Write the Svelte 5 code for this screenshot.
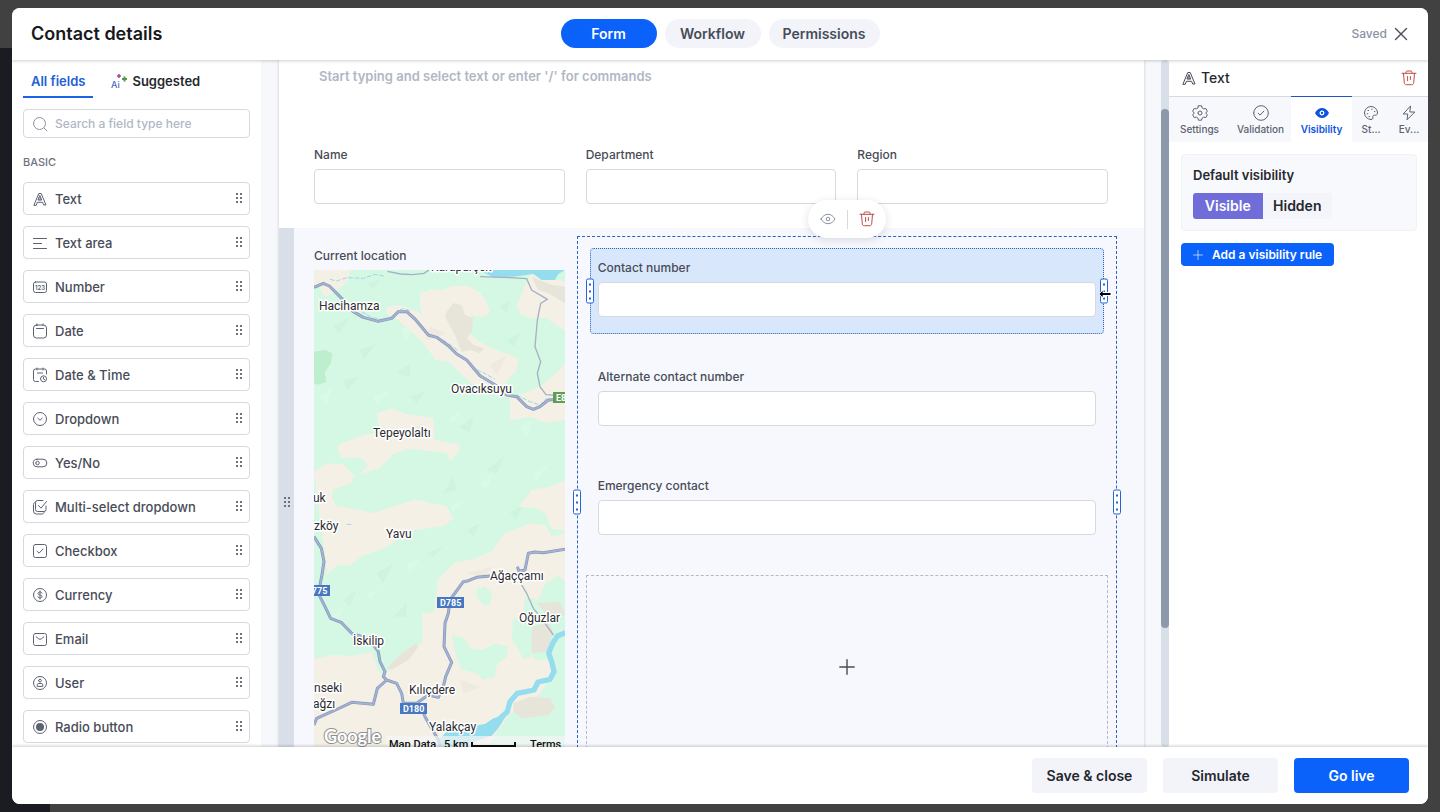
<script lang="ts">
  type Field = { icon: string; label: string };

  const steps = ['Form', 'Workflow', 'Permissions'];
  let step = $state('Form');

  const fields: Field[] = [
    { icon: 'text', label: 'Text' },
    { icon: 'textarea', label: 'Text area' },
    { icon: 'number', label: 'Number' },
    { icon: 'date', label: 'Date' },
    { icon: 'datetime', label: 'Date & Time' },
    { icon: 'dropdown', label: 'Dropdown' },
    { icon: 'yesno', label: 'Yes/No' },
    { icon: 'multi', label: 'Multi-select dropdown' },
    { icon: 'checkbox', label: 'Checkbox' },
    { icon: 'currency', label: 'Currency' },
    { icon: 'email', label: 'Email' },
    { icon: 'user', label: 'User' },
    { icon: 'radio', label: 'Radio button' },
  ];

  const panelTabs = [
    { id: 'settings', label: 'Settings' },
    { id: 'validation', label: 'Validation' },
    { id: 'visibility', label: 'Visibility' },
    { id: 'style', label: 'St...' },
    { id: 'events', label: 'Ev...' },
  ];
  let panelTab = $state('visibility');
  let visible = $state(true);

  const topFields = ['Name', 'Department', 'Region'];
  const sideFields = ['Contact number', 'Alternate contact number', 'Emergency contact'];

  // 16x16 grid, stroked
  const icons: Record<string, string> = {
    text: 'M2 14 6.800 2.500h2.400L14 14h-2.300l-1.100-2.700H5.400L4.300 14zM6.300 9h3.400L8 4.800zM8 6.500v2.500',
    textarea: 'M1.500 3.500h13M1.500 8.500h8M1.500 13.500h13',
    number: 'M3.500 3h9a2 2 0 0 1 2 2v6.500a2 2 0 0 1-2 2h-9a2 2 0 0 1-2-2V5a2 2 0 0 1 2-2z',
    date: 'M4.500 2h7a3 3 0 0 1 3 3v7a3 3 0 0 1-3 3h-7a3 3 0 0 1-3-3V5a3 3 0 0 1 3-3zM5 1v1.500M11 1v1.500M4.500 5.500h7',
    datetime: 'M6.500 14.500h-3a2 2 0 0 1-2-2V4a2 2 0 0 1 2-2h9a2 2 0 0 1 2 2v3M5 1v2M11 1v2M5.500 6h5M8.500 11.800a3 3 0 1 0 6 0 3 3 0 1 0-6 0M11.500 10.300v1.700l1.100.6',
    dropdown: 'M1.500 8a6.500 6.500 0 1 0 13 0 6.500 6.500 0 1 0-13 0M5.800 7.200 8 9.200l2.200-2',
    yesno: 'M5 4.200h6a3.800 3.800 0 0 1 0 7.600H5a3.800 3.800 0 0 1 0-7.600zM3.800 8a1.700 1.900 0 1 0 3.400 0 1.700 1.900 0 1 0-3.400 0',
    multi: 'M14 7v3.500a2 2 0 0 1-2 2H5.500a2 2 0 0 1-2-2v-7a2 2 0 0 1 2-2H11M6.500 6.500l2.500 2.700 5.500-6.700M3 3.500c-1 .2-1.500.9-1.500 2v6.500a3 3 0 0 0 3 3H10c1 0 1.700-.5 2-1.500',
    checkbox: 'M3.500 1.500h9a2 2 0 0 1 2 2v9a2 2 0 0 1-2 2h-9a2 2 0 0 1-2-2v-9a2 2 0 0 1 2-2zM5 8.200l2 2L11 6',
    currency: 'M1.500 8a6.500 6.500 0 1 0 13 0 6.500 6.500 0 1 0-13 0M8 4v8M10 6.200C9.800 5.300 9 5 8 5c-1.200 0-2 .6-2 1.500S6.800 7.800 8 8s2 .7 2 1.600S9.200 11 8 11c-1.100 0-1.900-.4-2.100-1.300',
    email: 'M3.500 2.500h9a2 2 0 0 1 2 2v8a2 2 0 0 1-2 2h-9a2 2 0 0 1-2-2v-8a2 2 0 0 1 2-2zM4.200 5.800C6 7 6.500 8.300 8 8.300S10 7 11.800 5.800',
    user: 'M1.500 8a6.500 6.500 0 1 0 13 0 6.500 6.500 0 1 0-13 0M6.600 5.600a1.400 1.400 0 1 0 2.800 0 1.400 1.400 0 1 0-2.800 0M5.200 11V9.800c0-.8.600-1.300 1.300-1.300h3c.700 0 1.300.5 1.300 1.300V11z',
    radio: 'M1.500 8a6.500 6.500 0 1 0 13 0 6.500 6.500 0 1 0-13 0',
    search: 'M1.500 7.500a6 6 0 1 0 12 0 6 6 0 1 0-12 0M12 12l3 2.800',
    settings: 'M6.500.8h3l.8 2.300c.5.2.9.4 1.200.7l2.300-.3 1.500 2.600L13.800 8l1.500 1.900-1.500 2.600-2.300-.3c-.3.3-.7.5-1.200.7l-.8 2.300h-3l-.8-2.300c-.5-.2-.9-.4-1.200-.7l-2.300.3L.7 9.900 2.200 8 .7 6.100l1.500-2.600 2.300.3c.3-.3.700-.5 1.200-.7zM6 8a2 2 0 1 0 4 0 2 2 0 1 0-4 0',
    validation: 'M.7 8a7.300 7.300 0 1 0 14.600 0A7.300 7.300 0 1 0 .7 8M5.200 8.200l1.900 1.900 3.800-4',
    style: 'M8 14.500A6.500 6.500 0 1 1 14.500 8c0 2-1.500 2.200-3 2.200-1.300 0-2 .6-1.600 1.900.4 1.400-.4 2.400-1.900 2.400zM5 5.500h.6M8.600 4.200h.6M11.300 6.600h.6M4.200 8.800h.6M6 11.600h.6',
    events: 'M9.300 1.200 2.200 9h4.600l-.8 5.800L13.800 7H9.200z',
    eye: 'M1 8c1.800-3 4.200-4.700 7-4.700S13.200 5 15 8c-1.800 3-4.200 4.700-7 4.700S2.800 11 1 8zM6.200 8a1.800 1.800 0 1 0 3.600 0 1.800 1.800 0 1 0-3.600 0',
    trash: 'M1 3.300h14M5 3.300V2.200C5 1.500 5.500 1 6.200 1h3.600c.7 0 1.200.5 1.200 1.200v1.100M2.500 3.300l.8 9.500c.1 1.200.8 1.900 2 1.900h5.400c1.200 0 1.900-.7 2-1.900l.8-9.500M6.600 6.500v4.200M9.400 6.500v3',
    close: 'M2.500 2.500l11 11M13.500 2.500l-11 11',
    plus: 'M8 .8v14.400M.8 8h14.400',
  };

  // town labels, in map pixels
  const towns = [
    { name: 'Karapürçek', x: 117, y: 1 },
    { name: 'Hacihamza', x: 5, y: 40 },
    { name: 'Ovacıksuyu', x: 137, y: 123 },
    { name: 'Tepeyolaltı', x: 59, y: 167 },
    { name: 'uk', x: -1, y: 232 },
    { name: 'zköy', x: 0, y: 260 },
    { name: 'Yavu', x: 72, y: 268 },
    { name: 'Ağaççamı', x: 176, y: 310 },
    { name: 'Oğuzlar', x: 205, y: 352 },
    { name: 'İskilip', x: 39, y: 375 },
    { name: 'nseki', x: 0, y: 422 },
    { name: 'ağzı', x: -1, y: 438 },
    { name: 'Kılıçdere', x: 95, y: 424 },
    { name: 'Yalakçay', x: 115, y: 461 },
  ];

  const shields = [
    { name: 'E80', x: 239, y: 122, color: '#5f9e4e' },
    { name: 'D775', x: -11, y: 315, color: '#4677c0' },
    { name: 'D785', x: 123, y: 327, color: '#4677c0' },
    { name: 'D180', x: 86, y: 433, color: '#4677c0' },
  ];
</script>

{#snippet icon(name: string, size = 16)}
  <svg class="icon" width={size} height={size} viewBox="0 0 16 16" aria-hidden="true">
    <path d={icons[name]} />
    {#if name === 'number'}
      <text x="8" y="10.500" text-anchor="middle">123</text>
    {:else if name === 'radio'}
      <circle class="solid" cx="8" cy="8" r="4" />
    {/if}
  </svg>
{/snippet}

{#snippet dots()}
  <svg class="dots" width="8" height="13" viewBox="0 0 8 13" aria-hidden="true">
    {#each [1, 5, 9] as y}
      <rect x="1" {y} width="2" height="2" />
      <rect x="5" {y} width="2" height="2" />
    {/each}
  </svg>
{/snippet}

{#snippet grip(side: string)}
  <span class="grip grip--{side}"><i></i><i></i><i></i></span>
{/snippet}

<div class="backdrop">
  <div class="modal" role="dialog" aria-label="Contact details">
    <header class="header">
      <h1>Contact details</h1>
      <nav class="steps">
        {#each steps as name}
          <button class="step" class:step--on={step === name} onclick={() => (step = name)}>{name}</button>
        {/each}
      </nav>
      <div class="status">
        <span>Saved</span>
        <button class="plain close" aria-label="Close">{@render icon('close')}</button>
      </div>
    </header>

    <div class="body">
      <aside class="sidebar">
        <div class="sidebar__tabs">
          <button class="side-tab side-tab--on">All fields</button>
          <button class="side-tab">
            <svg width="17" height="16" viewBox="0 0 17 16" aria-hidden="true">
              <text x="0" y="15" class="ai">Ai</text>
              <path d="M8 1v4M6 3h4" stroke="#b8488c" stroke-width="1.600" />
              <path d="M13.500 3.500v5M11 6h5" stroke="#4e9c46" stroke-width="2" />
            </svg>
            Suggested
          </button>
        </div>
        <label class="search">
          {@render icon('search')}
          <input type="text" placeholder="Search a field type here" aria-label="Search a field type here" />
        </label>
        <h2>BASIC</h2>
        <ul class="fields">
          {#each fields as field}
            <li>
              <button class="field-type">
                {@render icon(field.icon)}
                <span>{field.label}</span>
                {@render dots()}
              </button>
            </li>
          {/each}
        </ul>
      </aside>

      <main class="canvas">
        <div class="sheet">
          <div class="intro">
            <textarea
              aria-label="Form description"
              placeholder="Start typing and select text or enter '/' for commands"
            ></textarea>
            <div class="row">
              {#each topFields as label, i}
                <div class="field">
                  <label for="top-{i}">{label}</label>
                  <input id="top-{i}" type="text" />
                </div>
              {/each}
            </div>
          </div>

          <section class="section">
            <div class="section__handle">{@render dots()}</div>
            <div class="row section__content">
              <div class="location">
                <span class="caption">Current location</span>
                <svg class="map" viewBox="0 0 251 480" preserveAspectRatio="xMinYMin slice" role="img" aria-label="Map of the current location">
                  <rect width="251" height="480" fill="#d4f8e3" />
                  <g transform="scale(0.33333) translate(-42 -90)">
                    <g fill="#cff4de">
                      <path d="M100 260l50-30-30 50zM180 330l50-20-40 50zM290 400l40-30 0 40zM130 420l50-10-40 40zM330 470l50-20-30 40zM480 560l40-30-10 50zM560 690l50-40-20 50zM430 760l30-50 10 40zM200 130l40-10-20 30zM600 200l30-20-10 40zM620 300l40-20-20 40z" />
                      <path d="M130 1080l40-30-20 50zM230 1000l50-30-30 60zM150 1200l40-20-20 40zM280 1130l40-40 0 40zM500 870l40-20-20 40zM630 820l40-30-20 50zM380 940l50-20-30 30zM590 1270l40-40-10 50zM190 860l50-10-20 30z" />
                      <path fill="#bdeecd" d="M42 335l35-6 20 12-5 30-18 25 5 30-25 8-12-4z" />
                    </g>
                    <g fill="#dafae8">
                      <path d="M60 470l40-30-20 50zM220 470l50-20-40 40zM440 540l50-30-30 40zM660 560l40-20-20 50zM700 700l50-30-40 50zM540 730l40-30-20 50zM300 260l40 10-20 30z" />
                      <path d="M90 1130l40-30-20 50zM320 970l40-10-30 40zM450 800l40-20-30 40zM200 1060l40-10-30 30z" />
                    </g>
                    <g fill="#f5f0e6">
                      <path d="M42 90h110l-10 35-30 25-35 22-20-32-15 3z" />
                      <path d="M360 160l35-12 35 2 25-12 50 0 35 20 20 30 10 30-25 15-28-8-15 25 10 35 35 25 40 20 45 15 25 15-10 35-25 25-15 35-50-5-50-25-60-60-40-5-40-55-80-70-30-15 5-20 30-5 35 8 40 20-7-28z" />
                      <path d="M650 200l15-40 28-60 50 18 52 5v150l-30-20-25-18-45 0-30-10z" />
                      <path d="M630 470l50-12 50-25 35-30 30-35v172l-60 8-45-18-60 12z" />
                      <path d="M230 520l45-14 45 16 80 12 4 66 76 14-5 22-25 28-10-25-85-10-32-2-43 15-40 42-62 20 25-28-20-24-60 2-12-35 15-9 65-25 50-8z" />
                      <path d="M42 697l38-27 50 3 32 35-12 24-50 15-5 20 12 30 113 22 125-40 95 20 20 35-30 25-90 12-90 55-60 20-40 30-40 0-28 30z" />
                      <path d="M42 1256l58-11 55 3 60-12 22 60 15 10 60-60 55-40 0-85 35-5 12-100 50-48 60-12 50-22 40-54 75-30 48 6 20 35 48-15v160l-30-30-40 25-20 50-40-10-5 60 10 80 25 50 45 0 30 30-10 180-120 30-40 100H42z" />
                      <path d="M655 800l40-50 55-10 45-20v150l-40-2-20-50-30-15z" />
                    </g>
                    <g fill="#d4f8e3">
                      <path d="M455 1185l40 10 15 30 40 5 35-20 40 10-5 30-30 25-5 35-35 10-20-20-45-10-15-35z" />
                      <path d="M530 1045l25-5 22 20-8 35-20 0-18-25zM640 1130l25 20 20 30 10 70-25 8-20-40-15-20zM755 1210l40 0v311H560l70-100 90-60 35-60z" />
                    </g>
                    <g fill="#e7e4d9">
                      <path d="M440 215l20-25 25 5 10 30 25 10-5 40-15 20 20 20 32 10-12 15-30-10-25 5-20-50-30-55z" />
                      <path d="M695 110l60 25 40 5v50l-50-30-30-10zM260 1285l50-50 40-25 5 10-30 40-50 30zM695 1160l50-10 15 25-20 60-45 5zM640 1390l50-20 60 5 15 25-20 25-80 10-25-20zM710 1090l70-5 15 40-40 15z" />
                      <path opacity=".5" d="M390 260l50 20-60 20zM570 375l50-30-30 60zM330 570l40-20-20 50zM500 1000l80-20-30 30zM480 1320l60 20-50 20z" />
                    </g>
                    <path fill="#94ddee" d="M535 90h260l-20 12-10 18-40 0-25-18-60 8-60 2z" />
                    <path fill="#94ddee" d="M620 1425l-40 10-25 17-35 5-80 18-25 25-5 30h45l75-28 45-15 20-22z" />
                    <path class="river" d="M797 1178L772 1188 758 1210 746 1240 755 1265 762 1295 750 1318 714 1326 702 1350 652 1360 630 1385 622 1415 585 1448" />
                    <path class="stream" d="M90 118l20 5 30-10 50 2 35-12 30 6M185 215l30 18 25 4M300 210l10-4 20 6M430 300l45 32M530 390l20 8 35 20M650 465l40 20 30 10 20-20M140 853h20" />
                    <g class="minor">
                      <path d="M262 94l40 8 35 2 35-4 15-10M540 110L630 113 680 116 695 150 742 178 722 190 712 240 705 320 722 365 712 400 720 440 738 464 765 466M665 1035L680 1060 700 1105 725 1135 760 1185" />
                    </g>
                    {#each ['road road--edge', 'road'] as cls}
                      <g class={cls}>
                        <path d="M42 142l28-12 18 8 37 37 35 40 30 17 45 12 40-9 20-20h25l25 22 40 48 25 7 35 25 25 25 30 18 40 47 50 30 30 28 30 5 30 30 20 8 20-8 25-20 50-4" />
                        <path d="M42 890L64 925 72 965 65 1010 55 1060 75 1100 92 1135 125 1148 155 1180 205 1195 235 1235 240 1265 255 1295 250 1310 260 1320 290 1330 305 1360 310 1390 350 1390 385 1365 415 1372 430 1340 437 1310 455 1267 432 1220 435 1150 445 1120 450 1080 490 1025 505 1022 530 1012 570 1008" />
                        <path d="M652 980L657 994 675 990 685 940 705 936 730 938 795 928M260 1320L232 1345 220 1393 155 1387 100 1413 50 1435 42 1455M360 1390L375 1430 415 1500 420 1521" />
                      </g>
                    {/each}
                  </g>
                  {#each towns as town}
                    <text class="town" x={town.x} y={town.y}>{town.name}</text>
                  {/each}
                  {#each shields as shield}
                    <rect x={shield.x} y={shield.y} width="27" height="11" fill={shield.color} />
                    <text class="shield" x={shield.x + 3} y={shield.y + 9}>{shield.name}</text>
                  {/each}
                  <text class="google" x="10" y="473">Google</text>
                  <rect x="72" y="466" width="179" height="14" fill="#f5f5f5" opacity=".7" />
                  <g class="credit">
                    <text x="75" y="478">Map Data</text>
                    <text x="130" y="478">5 km</text>
                    <path d="M158 472v4h43v-4" />
                    <text x="216" y="478">Terms</text>
                  </g>
                </svg>
              </div>

              <div class="column">
                {@render grip('left')}
                {@render grip('right')}
                {#each sideFields as label, i}
                  <div class="field column__field" class:column__field--on={i === 0}>
                    <label for="side-{i}">{label}</label>
                    <input id="side-{i}" type="text" />
                    {#if i === 0}
                      {@render grip('left')}
                      {@render grip('right')}
                      <svg class="cursor" width="14" height="10" viewBox="0 0 14 10" aria-hidden="true">
                        <path d="M.8 5 5 .8v2.700h8v3H5v2.700z" />
                      </svg>
                      <div class="toolbar">
                        <button class="plain" aria-label="Preview field">{@render icon('eye')}</button>
                        <span class="toolbar__rule"></span>
                        <button class="plain danger" aria-label="Delete field">{@render icon('trash')}</button>
                      </div>
                    {/if}
                  </div>
                {/each}
                <button class="dropzone" aria-label="Add field">{@render icon('plus')}</button>
              </div>
            </div>
          </section>
        </div>
        <div class="scrollbar"><span></span></div>
      </main>

      <aside class="panel">
        <div class="panel__title">
          {@render icon('text')}
          <h2>Text</h2>
          <button class="plain danger" aria-label="Delete">{@render icon('trash')}</button>
        </div>
        <div class="panel__tabs">
          {#each panelTabs as tab}
            <button class="panel-tab panel-tab--{tab.id}" class:panel-tab--on={panelTab === tab.id} onclick={() => (panelTab = tab.id)}>
              {#if tab.id === 'visibility'}
                <svg width="16" height="16" viewBox="0 0 16 16" aria-hidden="true">
                  <path fill="currentColor" d="M1 8c1.800-3.300 4.200-5 7-5s5.200 1.700 7 5c-1.800 3.300-4.200 5-7 5S2.800 11.300 1 8z" />
                  <circle cx="8" cy="8" r="1.800" fill="none" stroke="#fff" stroke-width="1.300" />
                </svg>
              {:else}
                {@render icon(tab.id)}
              {/if}
              <span>{tab.label}</span>
            </button>
          {/each}
        </div>
        <div class="panel__body">
          <div class="card">
            <h3>Default visibility</h3>
            <div class="toggle">
              <button class:on={visible} onclick={() => (visible = true)}>Visible</button>
              <button class:on={!visible} onclick={() => (visible = false)}>Hidden</button>
            </div>
          </div>
          <button class="add-rule">{@render icon('plus', 10)}Add a visibility rule</button>
        </div>
      </aside>
    </div>

    <footer class="footer">
      <button>Save &amp; close</button>
      <button>Simulate</button>
      <button class="primary">Go live</button>
    </footer>
  </div>
</div>

<style>
  .backdrop {
    box-sizing: border-box;
    height: 100vh;
    padding: 8px 12px;
    background:
      linear-gradient(#1a1c22, #1a1c22) 0 48px / 50px 100% no-repeat,
      #414141;
    font-family: Inter, 'Liberation Sans', sans-serif;
    font-size: 13px;
    font-weight: 500;
    color: #484c57;
  }

  .backdrop :global(*) {
    box-sizing: border-box;
  }

  button,
  input,
  textarea {
    font: inherit;
    color: inherit;
  }

  button {
    padding: 0;
    border: 0;
    background: none;
    cursor: pointer;
  }

  h1,
  h2,
  h3,
  ul {
    margin: 0;
    padding: 0;
  }

  .icon {
    display: block;
    flex: none;
    fill: none;
    stroke: currentColor;
    stroke-width: 1;
    stroke-linecap: round;
    stroke-linejoin: round;
  }

  .icon text {
    fill: currentColor;
    stroke: none;
    font-size: 6px;
    font-weight: 600;
  }

  .icon .solid,
  .dots {
    fill: currentColor;
    stroke: none;
  }

  .plain {
    display: flex;
  }

  .danger {
    color: #c04a48;
  }

  .modal {
    display: flex;
    flex-direction: column;
    height: 100%;
    overflow: hidden;
    border-radius: 8px;
    background: #fff;
  }

  .header {
    position: relative;
    z-index: 2;
    display: grid;
    grid-template-columns: 1fr auto 1fr;
    align-items: center;
    flex: none;
    height: 52px;
    padding: 0 19px 1px;
    background: #fff;
    box-shadow: 0 1px 3px rgba(0, 0, 0, 0.2);
  }

  h1 {
    font-size: 18px;
    font-weight: 600;
    line-height: 24px;
    color: #17181c;
  }

  .steps {
    display: flex;
    gap: 8px;
  }

  .step {
    min-width: 96px;
    height: 29px;
    padding: 0 14px;
    border-radius: 15px;
    background: #f2f4fa;
    font-size: 14px;
    font-weight: 600;
  }

  .step--on {
    background: #0b62fb;
    color: #fff;
  }

  .status {
    display: flex;
    justify-content: flex-end;
    align-items: center;
    gap: 6px;
  }

  .status span {
    font-size: 12px;
    color: #8b92a3;
  }

  .close .icon {
    stroke-width: 1.4;
  }

  .body {
    display: flex;
    flex: 1;
    min-height: 0;
  }

  .sidebar {
    flex: none;
    width: 249px;
    padding: 0 11px;
    overflow: hidden;
  }

  .sidebar__tabs {
    display: flex;
    gap: 10px;
    height: 38px;
  }

  .side-tab {
    display: flex;
    align-items: center;
    gap: 4px;
    padding: 6px 8px 0;
    border-bottom: 2px solid transparent;
    font-size: 13px;
    font-weight: 600;
    color: #26282e;
  }

  .side-tab--on {
    border-color: #1a62e8;
    color: #2160d8;
  }

  .ai {
    fill: #4a66b8;
    font-size: 9px;
    font-weight: 500;
  }

  .search {
    display: flex;
    align-items: center;
    gap: 7px;
    height: 29px;
    margin-top: 11px;
    padding: 0 8px;
    border: 1px solid #d6d9de;
    border-radius: 4px;
    color: #8b92a3;
  }

  .search input {
    flex: 1;
    min-width: 0;
    padding: 0;
    border: 0;
    outline: 0;
    font-size: 12px;
  }

  ::placeholder {
    color: #b1b7c5;
    opacity: 1;
  }

  .sidebar h2 {
    margin: 16px 0 12px;
    font-size: 11px;
    font-weight: 500;
    line-height: 16px;
    color: #6d7482;
  }

  .fields {
    display: grid;
    gap: 11px;
    list-style: none;
  }

  .field-type {
    display: flex;
    align-items: center;
    gap: 7px;
    width: 100%;
    height: 33px;
    padding: 0 6px 0 8px;
    border: 1px solid #d6d9de;
    border-radius: 4px;
    background: #fff;
    text-align: left;
  }

  .field-type span {
    flex: 1;
  }

  .field-type .icon {
    color: #5c6270;
  }

  .dots {
    flex: none;
    color: #6b7180;
  }

  .canvas {
    display: flex;
    flex: 1;
    min-width: 0;
    padding-left: 18px;
    overflow: hidden;
    background: #f6f8fc;
  }

  .sheet {
    flex: 1;
    height: max-content;
    margin-right: 17px;
    background: #fff;
    box-shadow: 0 0 3px rgba(0, 0, 0, 0.2);
  }

  .intro {
    padding: 6px 36px 24px 35px;
  }

  textarea {
    display: block;
    width: 100%;
    height: 81px;
    padding: 0 5px;
    border: 0;
    outline: 0;
    resize: none;
    font-size: 13px;
    font-weight: 600;
    line-height: 20px;
  }

  .row {
    display: grid;
    grid-template-columns: repeat(3, 1fr);
    gap: 21px;
  }

  .field {
    display: grid;
    gap: 6px;
  }

  .field label,
  .caption {
    font-size: 12px;
    line-height: 16px;
  }

  .field input {
    width: 100%;
    height: 35px;
    padding: 0 8px;
    border: 1px solid #d6d9de;
    border-radius: 4px;
    background: #fff;
  }

  .section {
    display: flex;
    background: #f6f8fd;
  }

  .section__handle {
    display: flex;
    align-items: center;
    justify-content: center;
    width: 15px;
    background: #d8dfe8;
  }

  .section__content {
    flex: 1;
    padding: 8px 36px 8px 20px;
  }

  .location {
    display: flex;
    flex-direction: column;
    gap: 6px;
    padding-top: 12px;
  }

  .map {
    display: block;
    width: 100%;
    height: 480px;
    overflow: hidden;
    font-family: Roboto, 'Liberation Sans', sans-serif;
  }

  .river {
    fill: none;
    stroke: #94ddee;
    stroke-width: 16;
    stroke-linejoin: round;
  }

  .stream {
    fill: none;
    stroke: #9ad8df;
    stroke-width: 3;
    stroke-dasharray: 14 5;
  }

  .minor {
    fill: none;
    stroke: #a5b0c4;
    stroke-width: 4;
  }

  .road {
    fill: none;
    stroke: #a3b3d4;
    stroke-width: 5;
    stroke-linejoin: round;
  }

  .road--edge {
    stroke: #8796b8;
    stroke-width: 9;
  }

  .town {
    fill: #2b2c2f;
    stroke: #fff;
    stroke-width: 3px;
    stroke-linejoin: round;
    paint-order: stroke;
    font-size: 12px;
    font-weight: 400;
  }

  .shield {
    fill: #fff;
    font-size: 9px;
    font-weight: 700;
  }

  .google {
    fill: #fff;
    stroke: #8f8f8f;
    stroke-width: 2px;
    paint-order: stroke;
    font-family: Lato, sans-serif;
    font-size: 18px;
    font-weight: 700;
  }

  .credit {
    fill: #111;
    font-size: 11px;
    font-weight: 500;
  }

  .credit path {
    fill: none;
    stroke: #111;
    stroke-width: 2;
  }

  .column {
    position: relative;
    display: flex;
    flex-direction: column;
    gap: 23px;
    grid-column: span 2;
    margin: 0 -9px;
    padding: 11px 8px 8px;
    border: 1px dashed #2a62bd;
  }

  .column__field {
    position: relative;
    height: 86px;
    margin: 0 4px;
    padding: 11px 7px 0;
    align-content: start;
    border: 1px solid transparent;
    border-radius: 4px;
  }

  .column__field--on {
    border: 1px dotted #2a62bd;
    background: #d9e7fd;
  }

  .grip {
    position: absolute;
    top: 50%;
    display: flex;
    flex-direction: column;
    justify-content: space-around;
    align-items: center;
    width: 8px;
    height: 25px;
    padding: 1px 0;
    border: 1px solid #2563d6;
    border-radius: 2px;
    background: #fff;
    transform: translateY(-50%);
  }

  .grip i {
    width: 2px;
    height: 2px;
    background: #2563d6;
  }

  .grip--left {
    left: -5px;
  }

  .grip--right {
    right: -5px;
  }

  .cursor {
    position: absolute;
    top: 40px;
    right: -9px;
    fill: #000;
    stroke: #fff;
    stroke-width: 1;
  }

  .toolbar {
    position: absolute;
    top: -49px;
    left: 50%;
    display: flex;
    align-items: center;
    justify-content: space-between;
    width: 78px;
    height: 38px;
    padding: 0 11px 0 12px;
    border-radius: 19px;
    background: #fff;
    box-shadow: 0 2px 8px rgba(40, 50, 80, 0.15);
    color: #8b92a3;
    transform: translateX(-50%);
  }

  .toolbar__rule {
    width: 1px;
    height: 19px;
    background: #d6d9de;
  }

  .dropzone {
    display: grid;
    place-items: center;
    height: 184px;
    border: 1px dashed #b4b9c8;
  }

  .dropzone .icon {
    stroke-width: 1.4;
  }

  .scrollbar {
    flex: none;
    width: 8px;
    border-radius: 4px;
    background: #d8dfe8;
  }

  .scrollbar span {
    display: block;
    height: 519px;
    margin-top: 49px;
    border-radius: 4px;
    background: #8d98ad;
  }

  .panel {
    flex: none;
    width: 259px;
    background: #fff;
  }

  .panel__title {
    display: flex;
    align-items: center;
    gap: 4px;
    height: 36px;
    padding: 0 11px 1px 12px;
  }

  .panel__title h2 {
    flex: 1;
    font-size: 14px;
    font-weight: 500;
    color: #26282e;
  }

  .panel__tabs {
    display: flex;
    height: 46px;
    background: #f6f8fc;
  }

  .panel-tab {
    display: flex;
    flex: none;
    flex-direction: column;
    align-items: center;
    justify-content: center;
    gap: 2px;
    width: 61px;
    border-top: 1px solid #d5d9e5;
    font-size: 10px;
    line-height: 12px;
    color: #5c6270;
  }

  .panel-tab--style,
  .panel-tab--events {
    width: 38px;
  }

  .panel-tab--on {
    border-color: #1a56c8;
    background: #fff;
    font-weight: 600;
    color: #0b55e0;
  }

  .panel__body {
    padding: 12px 11px 12px 12px;
  }

  .card {
    padding: 12px 11px 11px;
    border: 1px solid #f0f2f6;
    border-radius: 4px;
    background: #f8f9fc;
  }

  .card h3 {
    margin-bottom: 9px;
    font-size: 13px;
    font-weight: 600;
    line-height: 17px;
    color: #26282e;
  }

  .toggle {
    display: flex;
    width: 139px;
    height: 26px;
    overflow: hidden;
    border-radius: 3px;
    background: #f3f5fb;
  }

  .toggle button {
    flex: 1;
    padding-bottom: 2px;
    font-size: 14px;
    font-weight: 600;
    color: #26282e;
  }

  .toggle .on {
    background: #706dd9;
    color: #fff;
  }

  .add-rule {
    display: flex;
    align-items: center;
    gap: 9px;
    height: 23px;
    margin-top: 12px;
    padding: 0 12px;
    border-radius: 4px;
    background: #0b62fb;
    font-size: 12px;
    font-weight: 600;
    color: #fff;
  }

  .footer {
    position: relative;
    z-index: 2;
    display: flex;
    flex: none;
    align-items: center;
    justify-content: flex-end;
    gap: 16px;
    height: 57px;
    padding: 0 19px;
    background: #fff;
    box-shadow: 0 -1px 3px rgba(0, 0, 0, 0.2);
  }

  .footer button {
    width: 115px;
    height: 35px;
    border-radius: 4px;
    background: #f2f4fa;
    font-size: 14px;
    font-weight: 600;
    color: #26282e;
  }

  .footer .primary {
    background: #0b62fb;
    color: #fff;
  }
</style>
